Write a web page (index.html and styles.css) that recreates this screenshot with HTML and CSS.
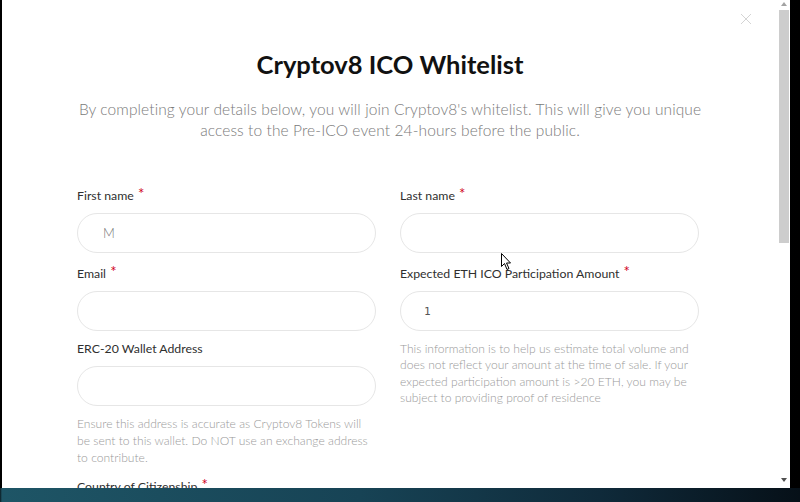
FILE: index.html
```
<!DOCTYPE html>
<html lang="en">
<head>
<meta charset="utf-8">
<title>Cryptov8 ICO Whitelist</title>
<link rel="stylesheet" href="styles.css">
</head>
<body>
<div class="screen">
  <div class="modal">
    <div class="content">
      <button class="close" aria-label="Close">
        <svg width="12" height="12" viewBox="0 0 12 12"><path d="M1 1L11 11M11 1L1 11" stroke="#d4d4d4" stroke-width="1" fill="none"/></svg>
      </button>
      <h1 class="title">Cryptov8 ICO Whitelist</h1>
      <p class="intro">By completing your details below, you will join Cryptov8's whitelist. This will give you unique access to the Pre-ICO event 24-hours before the public.</p>
      <form class="form">
        <div class="col">
          <div class="field">
            <label class="label">First name <span class="req">*</span></label>
            <input class="input" type="text" value="M">
          </div>
          <div class="field">
            <label class="label">Email <span class="req">*</span></label>
            <input class="input" type="email">
          </div>
          <div class="field">
            <label class="label">ERC-20 Wallet Address</label>
            <input class="input" type="text">
            <p class="help help-left">Ensure this address is accurate as Cryptov8 Tokens will be sent to this wallet. Do NOT use an exchange address to contribute.</p>
          </div>
          <div class="field">
            <label class="label">Country of Citizenship <span class="req">*</span></label>
          </div>
        </div>
        <div class="col">
          <div class="field">
            <label class="label">Last name <span class="req">*</span></label>
            <input class="input" type="text">
          </div>
          <div class="field">
            <label class="label">Expected ETH ICO Participation Amount <span class="req">*</span></label>
            <input class="input input-num" type="text" value="1">
            <p class="help help-right">This information is to help us estimate total volume and does not reflect your amount at the time of sale. If your expected participation amount is &gt;20 ETH, you may be subject to providing proof of residence</p>
          </div>
        </div>
      </form>
      <svg class="cursor" width="12" height="18" viewBox="0 0 12 18"><path d="M0.5 0.5L0.5 13.5L3.5 10.5L6 16.5L8 15.5L5.5 10L9.5 10Z" fill="#fff" stroke="#000" stroke-width="1"/></svg>
    </div>
    <div class="scrollbar">
      <span class="arrow arrow-up"></span>
      <span class="thumb"></span>
      <span class="arrow arrow-down"></span>
    </div>
  </div>
  <div class="band"></div>
</div>
</body>
</html>
```
FILE: styles.css
```
* { box-sizing: border-box; }
html, body { margin: 0; padding: 0; }
body {
  background: #000;
  font-family: "Lato", "Open Sans", sans-serif;
  width: 800px;
  height: 502px;
  overflow: hidden;
}
.screen {
  display: flex;
  flex-direction: column;
  height: 502px;
  background: linear-gradient(90deg, #000 0, #020914 60%, #000 100%);
}
.modal {
  display: flex;
  width: 788px;
  height: 488px;
  margin-left: 2px;
  background: #fff;
  overflow: hidden;
}
.content {
  position: relative;
  flex: 1;
  overflow: hidden;
}
.close {
  position: absolute;
  top: 12px;
  left: 737px;
  width: 14px;
  height: 14px;
  padding: 0;
  border: 0;
  background: none;
  display: flex;
  align-items: center;
  justify-content: center;
}
.title {
  margin: 0;
  padding-top: 49px;
  font-size: 25.5px;
  line-height: 30px;
  font-weight: 700;
  color: #111;
  text-align: center;
}
.intro {
  width: 660px;
  margin: 20px auto 0;
  font-size: 15.5px;
  letter-spacing: 0.1px;
  line-height: 21px;
  font-weight: 300;
  color: #7a7a7a;
  text-align: center;
}
.form {
  display: flex;
  gap: 24px;
  width: 622px;
  margin: 43px 0 0 75px;
}
.col {
  flex: 0 0 299px;
  display: flex;
  flex-direction: column;
}
.field {
  display: flex;
  flex-direction: column;
  margin-bottom: 9px;
}
.label {
  font-size: 12.3px;
  line-height: 18px;
  color: #2f2f2f;
  margin-bottom: 8px;
}
.req {
  color: #d0021b;
  font-size: 15px;
  vertical-align: 1px;
  margin-left: 1px;
}
.input {
  width: 299px;
  height: 40px;
  border: 1px solid #e6e6e6;
  border-radius: 20px;
  padding: 0 25px;
  font-family: "Lato", sans-serif;
  font-size: 13px;
  font-weight: 300;
  color: #777;
  background: #fff;
  outline: none;
}
.input-num {
  font-family: "DejaVu Sans Mono", monospace;
  font-size: 11px;
  color: #555;
  padding-left: 23px;
}
.help {
  margin: 0;
  font-size: 12.1px;
  font-weight: 300;
  color: #9a9a9a;
}
.help-left {
  margin-top: 9px;
  line-height: 17px;
}
.help-right {
  margin-top: 10px;
  line-height: 16.4px;
}
.cursor {
  position: absolute;
  left: 499px;
  top: 253px;
}
.scrollbar {
  position: relative;
  width: 12px;
  flex: 0 0 12px;
  background: #fff;
}
.thumb {
  position: absolute;
  left: 1px;
  top: 10px;
  width: 10px;
  height: 233px;
  background: #cdcdcd;
}
.arrow {
  position: absolute;
  left: 3px;
  width: 0;
  height: 0;
  border-left: 3px solid transparent;
  border-right: 3px solid transparent;
}
.arrow-up {
  top: 2px;
  border-bottom: 4px solid #a3a3a3;
}
.arrow-down {
  top: 478px;
  border-top: 4px solid #505050;
}
.band {
  height: 14px;
  background: linear-gradient(90deg, #0b1a20 0, #1e5566 2px, #1b4d5e 20%, #174355 45%, #0f2a3a 75%, #061018 100%);
}
```
